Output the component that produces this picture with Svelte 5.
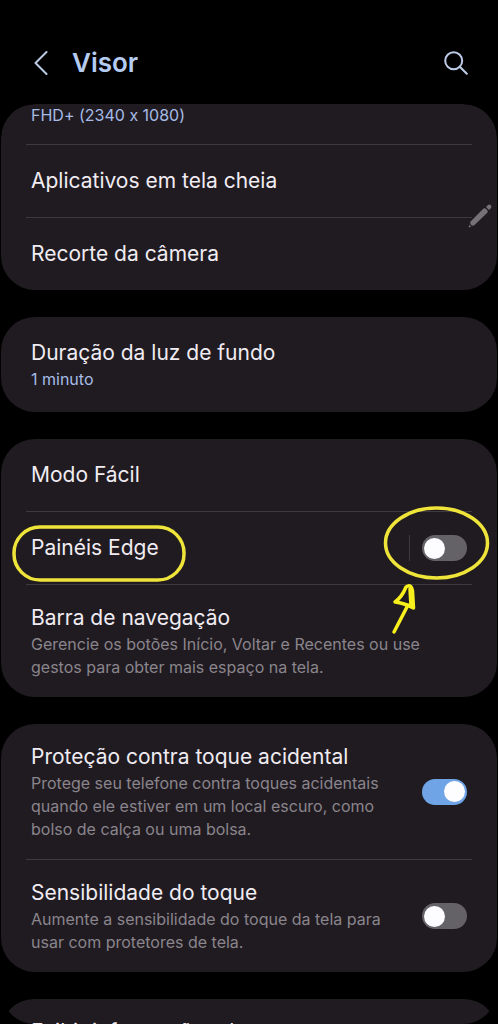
<script lang="ts">
  let edgePanels = $state(false);
  let accidentalTouch = $state(true);
  let touchSensitivity = $state(false);
</script>

<div class="screen">
  <header class="topbar">
    <button class="icon-btn" aria-label="Voltar">
      <svg width="14" height="24" viewBox="0 0 14 24">
        <path d="M12.5 1 L1.5 12 L12.5 23" />
      </svg>
    </button>
    <h1>Visor</h1>
    <button class="icon-btn search" aria-label="Pesquisar">
      <svg width="24" height="24" viewBox="0 0 24 24">
        <circle cx="9.7" cy="9.7" r="8.5" />
        <path d="M15.8 15.8 L22.8 22.8" />
      </svg>
    </button>
  </header>

  <main class="list">
    <section class="card">
      <a class="row resolution" href="#resolution"><span class="value">FHD+ (2340 x 1080)</span></a>
      <a class="row" href="#fullscreen"><span class="title">Aplicativos em tela cheia</span></a>
      <a class="row" href="#cutout"><span class="title">Recorte da câmera</span></a>
    </section>

    <section class="card">
      <a class="row" href="#timeout">
        <span class="title">Duração da luz de fundo</span>
        <span class="value">1 minuto</span>
      </a>
    </section>

    <section class="card">
      <a class="row" href="#easy"><span class="title">Modo Fácil</span></a>
      <div class="row split">
        <a class="text" href="#edge"><span class="title">Painéis Edge</span></a>
        <div class="switch-side">
          <input type="checkbox" class="switch" aria-label="Painéis Edge" bind:checked={edgePanels} />
        </div>
        <svg class="mark ring" width="174" height="58" viewBox="0 0 174 58">
          <rect x="2" y="2" width="170" height="53" rx="26" />
        </svg>
        <svg class="mark pointer" width="108" height="132" viewBox="0 0 108 132">
          <ellipse cx="53.5" cy="38" rx="51" ry="35" />
          <path class="arrow" d="M11 127 L25 100 M12 97 Q19 92 23 82 Q28 78 29.5 86 L30.5 103 Q21 98 12 97 M27 84 L28 101" />
        </svg>
      </div>
      <a class="row detailed" href="#navbar">
        <span class="title">Barra de navegação</span>
        <span class="summary">Gerencie os botões Início, Voltar e Recentes ou use gestos para obter mais espaço na tela.</span>
      </a>
    </section>

    <section class="card">
      <label class="row split detailed">
        <span class="text">
          <span class="title">Proteção contra toque acidental</span>
          <span class="summary">Protege seu telefone contra toques acidentais quando ele estiver em um local escuro, como bolso de calça ou uma bolsa.</span>
        </span>
        <input type="checkbox" class="switch" bind:checked={accidentalTouch} />
      </label>
      <label class="row split detailed">
        <span class="text">
          <span class="title">Sensibilidade do toque</span>
          <span class="summary">Aumente a sensibilidade do toque da tela para usar com protetores de tela.</span>
        </span>
        <input type="checkbox" class="switch" bind:checked={touchSensitivity} />
      </label>
    </section>

    <section class="card">
      <a class="row detailed" href="#charging"><span class="title">Exibir informações da carga</span></a>
    </section>
  </main>

  <button class="edit" aria-label="Editar">
    <svg width="24" height="24" viewBox="0 0 24 24">
      <path d="M0.5 23.5 L1.3 20.8 L3.2 22.7 Z M2.5 17.5 L15.5 4.5 Q16.8 3.7 18 4.8 L19.3 6.2 Q20.3 7.5 19.3 8.7 L6.3 21.3 Q4.5 22.3 2.8 20.8 Q1.7 19.2 2.5 17.5 Z M18 3 L20 1 Q21.5 0 22.8 1.2 Q24 2.5 23 4 L21 6 Z" />
    </svg>
  </button>
</div>

<style>
  :global(body) {
    margin: 0;
    background: #000;
  }

  .screen {
    position: relative;
    display: flex;
    flex-direction: column;
    height: 100vh;
    overflow: hidden;
    background: #000;
    color: #f0ecf2;
    font-family: Inter, Roboto, sans-serif;
    font-variant-ligatures: no-contextual;
  }

  .topbar {
    display: flex;
    align-items: center;
    flex-shrink: 0;
    gap: 14px;
    padding: 42px 20px 20px 24px;
  }

  h1 {
    flex: 1;
    margin: 0;
    color: #b4cbf2;
    font-size: 26px;
    font-weight: 600;
    line-height: 42px;
  }

  .icon-btn {
    display: flex;
    align-items: center;
    justify-content: center;
    width: 34px;
    height: 40px;
    padding: 0;
    border: none;
    background: none;
    cursor: pointer;
  }

  .icon-btn.search {
    width: 44px;
  }

  .icon-btn svg {
    fill: none;
    stroke: #bccbe6;
    stroke-width: 2;
    stroke-linecap: round;
    stroke-linejoin: round;
  }

  /* Scrolled list, clipped with the same rounding as the cards */
  .list {
    display: flex;
    flex: 1;
    flex-direction: column;
    gap: 27px;
    min-height: 0;
    margin: 0 1px;
    overflow: hidden;
    border-radius: 34px;
  }

  .card {
    flex-shrink: 0;
    padding: 0 25px;
    border-radius: 34px;
    background: #201b21;
  }

  .row {
    display: block;
    padding: 21px 5px;
    border-bottom: 1px solid #3d393f;
    color: inherit;
    text-decoration: none;
  }

  .row:last-child {
    border-bottom: none;
  }

  .row.detailed {
    padding-top: 18px;
    padding-bottom: 18px;
  }

  .row.resolution {
    padding-top: 0;
    padding-bottom: 17px;
  }

  .row.split {
    position: relative;
    display: flex;
    align-items: center;
    gap: 24px;
  }

  .text {
    flex: 1;
    min-width: 0;
    color: inherit;
    text-decoration: none;
  }

  .title,
  .summary,
  .value {
    display: block;
  }

  .title {
    font-size: 21px;
    line-height: 30px;
  }

  .summary,
  .value {
    font-size: 16px;
    line-height: 23px;
  }

  .summary {
    color: #8a858c;
  }

  .value {
    color: #a6bce6;
  }

  .switch-side {
    display: flex;
    padding-left: 12px;
    border-left: 1px solid #3d393f;
  }

  .switch {
    display: flex;
    align-items: center;
    flex-shrink: 0;
    width: 45px;
    height: 26px;
    margin: 0;
    padding: 0 2px;
    box-sizing: border-box;
    border-radius: 13px;
    background: #656267;
    appearance: none;
    cursor: pointer;
  }

  .switch::before {
    content: '';
    width: 21px;
    height: 21px;
    border-radius: 50%;
    background: #fdfcfe;
  }

  .switch:checked {
    justify-content: flex-end;
    background: #6fa5e6;
  }

  /* Hand-drawn highlights over the row */
  .mark {
    position: absolute;
    z-index: 1;
    fill: none;
    stroke: #efe53a;
    stroke-width: 3.5;
    stroke-linecap: round;
    stroke-linejoin: round;
    pointer-events: none;
  }

  .arrow {
    stroke: #f8f01c;
  }

  .ring {
    top: 13px;
    left: -14px;
  }

  .pointer {
    top: -7px;
    right: -19px;
  }

  .edit {
    position: absolute;
    top: 204px;
    right: 6px;
    display: flex;
    padding: 0;
    border: none;
    background: none;
    cursor: pointer;
  }

  .edit svg {
    fill: #757177;
  }
</style>
